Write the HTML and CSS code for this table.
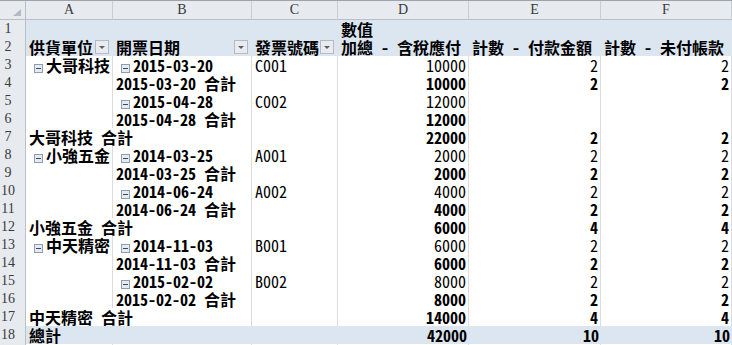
FILE: index.html
```html
<!DOCTYPE html>
<html lang="zh-Hant">
<head>
<meta charset="utf-8">
<title>樞紐分析表</title>
<link rel="stylesheet" href="styles.css">
</head>
<body>
<div class="sheet">
  <div class="row colhead">
    <div class="corner"><svg width="8" height="7" viewBox="0 0 8 7"><path d="M8 0V7H0z" fill="#b4bac3"/></svg></div>
    <div class="ch">A</div><div class="ch">B</div><div class="ch">C</div><div class="ch">D</div><div class="ch">E</div><div class="ch">F</div>
  </div>

  <div class="row">
    <div class="rh">1</div>
    <div class="h"></div><div class="h"></div><div class="h"></div><div class="h b">數值</div><div class="h"></div><div class="h"></div>
  </div>
  <div class="row hdr2">
    <div class="rh">2</div>
    <div class="h b hf">供貨單位<svg class="dd" width="14" height="14" viewBox="0 0 14 14"><rect x="0.5" y="0.5" width="13" height="13" fill="#e9ebee" stroke="#b3bac4"/><path d="M4 6h6l-3 3z" fill="#5a5f66"/></svg></div>
    <div class="h b hf">開票日期<svg class="dd" width="14" height="14" viewBox="0 0 14 14"><rect x="0.5" y="0.5" width="13" height="13" fill="#e9ebee" stroke="#b3bac4"/><path d="M4 6h6l-3 3z" fill="#5a5f66"/></svg></div>
    <div class="h b hf">發票號碼<svg class="dd" width="14" height="14" viewBox="0 0 14 14"><rect x="0.5" y="0.5" width="13" height="13" fill="#e9ebee" stroke="#b3bac4"/><path d="M4 6h6l-3 3z" fill="#5a5f66"/></svg></div>
    <div class="h b">加總 - 含稅應付</div>
    <div class="h b">計數 - 付款金額</div>
    <div class="h b">計數 - 未付帳款</div>
  </div>

  <div class="row">
    <div class="rh">3</div>
    <div class="c b"><svg class="tg" width="9" height="9" viewBox="0 0 9 9"><rect x="0.5" y="0.5" width="8" height="8" fill="#e6ebf1" stroke="#8d9db3"/><path d="M2 4.5h5" stroke="#3d4856"/></svg>大哥科技</div>
    <div class="c b"><svg class="tg" width="9" height="9" viewBox="0 0 9 9"><rect x="0.5" y="0.5" width="8" height="8" fill="#e6ebf1" stroke="#8d9db3"/><path d="M2 4.5h5" stroke="#3d4856"/></svg>2015-03-20</div>
    <div class="c">C001</div>
    <div class="c n">10000</div><div class="c n">2</div><div class="c n">2</div>
  </div>
  <div class="row">
    <div class="rh">4</div>
    <div class="c"></div>
    <div class="c b">2015-03-20 合計</div>
    <div class="c"></div>
    <div class="c n b">10000</div><div class="c n b">2</div><div class="c n b">2</div>
  </div>
  <div class="row">
    <div class="rh">5</div>
    <div class="c"></div>
    <div class="c b"><svg class="tg" width="9" height="9" viewBox="0 0 9 9"><rect x="0.5" y="0.5" width="8" height="8" fill="#e6ebf1" stroke="#8d9db3"/><path d="M2 4.5h5" stroke="#3d4856"/></svg>2015-04-28</div>
    <div class="c">C002</div>
    <div class="c n">12000</div><div class="c n"></div><div class="c n"></div>
  </div>
  <div class="row pre">
    <div class="rh">6</div>
    <div class="c"></div>
    <div class="c b">2015-04-28 合計</div>
    <div class="c"></div>
    <div class="c n b">12000</div><div class="c n"></div><div class="c n"></div>
  </div>
  <div class="row sub">
    <div class="rh">7</div>
    <div class="c b span2">大哥科技 合計</div>
    <div class="c"></div>
    <div class="c n b">22000</div><div class="c n b">2</div><div class="c n b">2</div>
  </div>

  <div class="row">
    <div class="rh">8</div>
    <div class="c b"><svg class="tg" width="9" height="9" viewBox="0 0 9 9"><rect x="0.5" y="0.5" width="8" height="8" fill="#e6ebf1" stroke="#8d9db3"/><path d="M2 4.5h5" stroke="#3d4856"/></svg>小強五金</div>
    <div class="c b"><svg class="tg" width="9" height="9" viewBox="0 0 9 9"><rect x="0.5" y="0.5" width="8" height="8" fill="#e6ebf1" stroke="#8d9db3"/><path d="M2 4.5h5" stroke="#3d4856"/></svg>2014-03-25</div>
    <div class="c">A001</div>
    <div class="c n">2000</div><div class="c n">2</div><div class="c n">2</div>
  </div>
  <div class="row">
    <div class="rh">9</div>
    <div class="c"></div>
    <div class="c b">2014-03-25 合計</div>
    <div class="c"></div>
    <div class="c n b">2000</div><div class="c n b">2</div><div class="c n b">2</div>
  </div>
  <div class="row">
    <div class="rh">10</div>
    <div class="c"></div>
    <div class="c b"><svg class="tg" width="9" height="9" viewBox="0 0 9 9"><rect x="0.5" y="0.5" width="8" height="8" fill="#e6ebf1" stroke="#8d9db3"/><path d="M2 4.5h5" stroke="#3d4856"/></svg>2014-06-24</div>
    <div class="c">A002</div>
    <div class="c n">4000</div><div class="c n">2</div><div class="c n">2</div>
  </div>
  <div class="row pre">
    <div class="rh">11</div>
    <div class="c"></div>
    <div class="c b">2014-06-24 合計</div>
    <div class="c"></div>
    <div class="c n b">4000</div><div class="c n b">2</div><div class="c n b">2</div>
  </div>
  <div class="row sub">
    <div class="rh">12</div>
    <div class="c b span2">小強五金 合計</div>
    <div class="c"></div>
    <div class="c n b">6000</div><div class="c n b">4</div><div class="c n b">4</div>
  </div>

  <div class="row">
    <div class="rh">13</div>
    <div class="c b"><svg class="tg" width="9" height="9" viewBox="0 0 9 9"><rect x="0.5" y="0.5" width="8" height="8" fill="#e6ebf1" stroke="#8d9db3"/><path d="M2 4.5h5" stroke="#3d4856"/></svg>中天精密</div>
    <div class="c b"><svg class="tg" width="9" height="9" viewBox="0 0 9 9"><rect x="0.5" y="0.5" width="8" height="8" fill="#e6ebf1" stroke="#8d9db3"/><path d="M2 4.5h5" stroke="#3d4856"/></svg>2014-11-03</div>
    <div class="c">B001</div>
    <div class="c n">6000</div><div class="c n">2</div><div class="c n">2</div>
  </div>
  <div class="row">
    <div class="rh">14</div>
    <div class="c"></div>
    <div class="c b">2014-11-03 合計</div>
    <div class="c"></div>
    <div class="c n b">6000</div><div class="c n b">2</div><div class="c n b">2</div>
  </div>
  <div class="row">
    <div class="rh">15</div>
    <div class="c"></div>
    <div class="c b"><svg class="tg" width="9" height="9" viewBox="0 0 9 9"><rect x="0.5" y="0.5" width="8" height="8" fill="#e6ebf1" stroke="#8d9db3"/><path d="M2 4.5h5" stroke="#3d4856"/></svg>2015-02-02</div>
    <div class="c">B002</div>
    <div class="c n">8000</div><div class="c n">2</div><div class="c n">2</div>
  </div>
  <div class="row pre">
    <div class="rh">16</div>
    <div class="c"></div>
    <div class="c b">2015-02-02 合計</div>
    <div class="c"></div>
    <div class="c n b">8000</div><div class="c n b">2</div><div class="c n b">2</div>
  </div>
  <div class="row sub last">
    <div class="rh">17</div>
    <div class="c b span2">中天精密 合計</div>
    <div class="c"></div>
    <div class="c n b">14000</div><div class="c n b">4</div><div class="c n b">4</div>
  </div>
  <div class="row tot">
    <div class="rh">18</div>
    <div class="t b span3">總計</div>
    <div class="t n b">42000</div><div class="t n b">10</div><div class="t n b">10</div>
  </div>
  <div class="row">
    <div class="rh"></div>
    <div class="c"></div><div class="c"></div><div class="c"></div><div class="c"></div><div class="c"></div><div class="c"></div>
  </div>
</div>
</body>
</html>
```

FILE: styles.css
```css
* { box-sizing: border-box; }
html, body { margin: 0; padding: 0; background: #fff; }
body {
  width: 732px;
  height: 345px;
  overflow: hidden;
  font-family: "Noto Sans Mono CJK TC", "Noto Sans CJK TC", monospace;
  font-size: 16px;
  color: #000;
}
.sheet { display: flex; flex-direction: column; width: 732px; }
.row {
  display: grid;
  grid-template-columns: 26px 87px 139px 86px 131px 132px 131px;
  height: 18px;
  flex: none;
}
.colhead {
  height: 20px;
  border-top: 1px solid #9da3ab;
  background: #e7eaee;
}
.corner {
  display: flex;
  justify-content: flex-end;
  align-items: flex-end;
  padding: 0 4px 3px 0;
  border-right: 1px solid #b9bfc7;
  border-bottom: 1px solid #b9bfc7;
}
.ch {
  font-family: "Liberation Serif", serif;
  font-size: 14px;
  line-height: 18px;
  color: #3a3a3a;
  text-align: center;
  border-right: 1px solid #c9ced5;
  border-bottom: 1px solid #b9bfc7;
}
.rh {
  background: #e7eaee;
  font-family: "Liberation Serif", serif;
  font-size: 14px;
  line-height: 18px;
  color: #3a3a3a;
  text-align: center;
  padding-right: 9px;
  border-right: 1px solid #b9bfc7;
  border-bottom: 1px solid #cfd3d9;
}
.h {
  background: #dce6f1;
  padding: 1px 2px 0 3px;
  line-height: 17px;
  white-space: nowrap;
}
.hdr2 .h { border-bottom: 1px solid #95b3d7; }
.hf { display: flex; align-items: flex-start; }
.dd { margin: 1px 2px 0 auto; flex: none; }
.c {
  background: #fff;
  border-right: 1px solid #dadcdd;
  border-bottom: 1px solid #dadcdd;
  padding: 1px 2px 0 3px;
  line-height: 17px;
  white-space: nowrap;
}
.t {
  background: #dce6f1;
  padding: 1px 2px 0 3px;
  line-height: 17px;
  white-space: nowrap;
}
.tg { vertical-align: -1px; margin: 0 3px 0 5px; }
.b { font-weight: 700; }
.n { text-align: right; }
.span2 { grid-column: span 2; }
.span3 { grid-column: span 3; }
.pre > .c, .sub > .c { border-bottom-color: #4f81bd; }
.last > .c { border-bottom-color: #95b3d7; }
```
